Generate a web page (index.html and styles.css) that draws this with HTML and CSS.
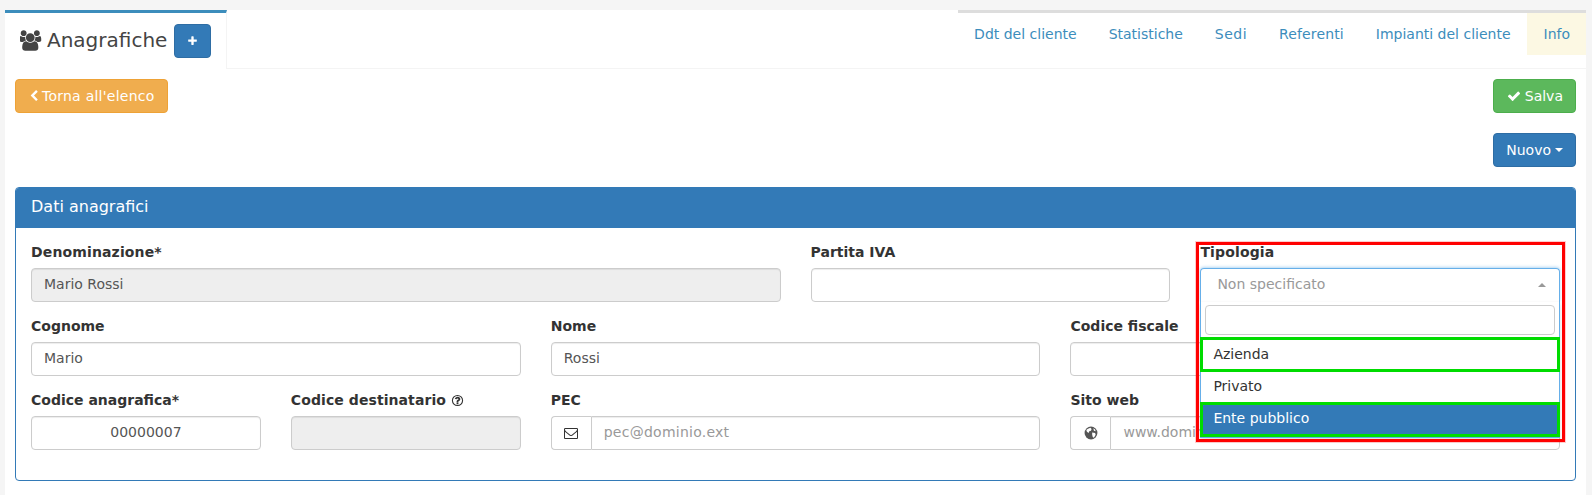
FILE: index.html
```html
<!DOCTYPE html>
<html lang="en">
<head>
    <meta charset="UTF-8">
    <meta name="viewport" content="width=device-width, initial-scale=1.0">
    <title>Anagrafiche</title>
    <link rel="stylesheet" href="styles.css">
</head>
<body>
    <div class="wrapper">
        <div class="tabs-bar">
            <div class="title-tab">
                <svg class="icon-users" viewBox="0 0 1920 1792"><path d="M529 896q-162 5-265 128h-134q-82 0-138-40.500t-56-118.500q0-353 124-353 6 0 43.500 21t97.500 42.500 119 21.500q67 0 133-23-5 37-5 66 0 139 81 256zm1071 637q0 120-73 189.500t-194 69.500h-874q-121 0-194-69.500t-73-189.500q0-53 3.500-103.500t14-109 26.500-108.500 43-97.500 62-81 85.500-53.500 111.500-20q10 0 43 21.500t73 48 107 48 135 21.500 135-21.500 107-48 73-48 43-21.500q61 0 111.500 20t85.500 53.500 62 81 43 97.500 26.500 108.500 14 109 3.500 103.500zm-1024-1277q0 106-75 181t-181 75-181-75-75-181 75-181 181-75 181 75 75 181zm704 384q0 159-112.500 271.500t-271.500 112.500-271.500-112.500-112.500-271.500 112.500-271.500 271.500-112.500 271.500 112.500 112.500 271.500zm576 225q0 78-56 118.500t-138 40.500h-134q-103-123-265-128 81-117 81-256 0-29-5-66 66 23 133 23 59 0 119-21.500t97.500-42.500 43.500-21q124 0 124 353zm-128-609q0 106-75 181t-181 75-181-75-75-181 75-181 181-75 181 75 75 181z"/></svg>
                <span class="title-text">Anagrafiche</span>
                <a class="btn btn-primary btn-add">
                    <svg class="icon-plus" viewBox="0 0 1792 1792"><path d="M1600 736v192q0 40-28 68t-68 28h-416v416q0 40-28 68t-68 28h-192q-40 0-68-28t-28-68v-416h-416q-40 0-68-28t-28-68v-192q0-40 28-68t68-28h416v-416q0-40 28-68t68-28h192q40 0 68 28t28 68v416h416q40 0 68 28t28 68z"/></svg>
                </a>
            </div>
            <ul class="nav-tabs">
                <li><a>Ddt del cliente</a></li>
                <li><a>Statistiche</a></li>
                <li class="tab-sedi"><a>Sedi</a></li>
                <li class="tab-referenti"><a>Referenti</a></li>
                <li><a>Impianti del cliente</a></li>
                <li class="active"><a>Info</a></li>
            </ul>
        </div>

        <div class="content">
            <div class="toolbar">
                <a class="btn btn-warning">
                    <svg class="icon-back" viewBox="0 0 1792 1792"><path d="M1427 301l-531 531 531 531q19 19 19 45t-19 45l-166 166q-19 19-45 19t-45-19l-742-742q-19-19-19-45t19-45l742-742q19-19 45-19t45 19l166 166q19 19 19 45t-19 45z"/></svg>
                    <span class="back-text">Torna all'elenco</span>
                </a>
                <a class="btn btn-success">
                    <svg class="icon-sm" viewBox="0 0 1792 1792"><path d="M1671 566q0 40-28 68l-724 724-136 136q-28 28-68 28t-68-28l-136-136-362-362q-28-28-28-68t28-68l136-136q28-28 68-28t68 28l294 295 656-657q28-28 68-28t68 28l136 136q28 28 28 68z"/></svg>
                    <span>Salva</span>
                </a>
            </div>
            <div class="toolbar toolbar-end">
                <a class="btn btn-primary"><span>Nuovo</span><span class="caret"></span></a>
            </div>

            <div class="panel">
                <div class="panel-heading">Dati anagrafici</div>
                <div class="panel-body">
                    <div class="form-grid">
                        <div class="field span-6">
                            <label class="spaced">Denominazione*</label>
                            <input type="text" value="Mario Rossi" disabled>
                        </div>
                        <div class="field span-3">
                            <label>Partita IVA</label>
                            <input type="text">
                        </div>
                        <div class="field span-3 tipologia">
                            <label class="spaced">Tipologia</label>
                            <div class="select-box">
                                <span class="select-value">Non specificato</span>
                                <span class="select-arrow"></span>
                            </div>
                            <div class="select-dropdown">
                                <div class="select-search"><input type="text"></div>
                                <div class="select-option marked first">Azienda</div>
                                <div class="select-option">Privato</div>
                                <div class="select-option marked highlighted">Ente pubblico</div>
                            </div>
                            <div class="red-mark"></div>
                        </div>

                        <div class="field span-4">
                            <label>Cognome</label>
                            <input type="text" value="Mario">
                        </div>
                        <div class="field span-4">
                            <label>Nome</label>
                            <input type="text" value="Rossi">
                        </div>
                        <div class="field span-4">
                            <label>Codice fiscale</label>
                            <input type="text">
                        </div>

                        <div class="field span-2">
                            <label>Codice anagrafica*</label>
                            <input class="centered" type="text" value="00000007">
                        </div>
                        <div class="field span-2">
                            <label class="spaced-sm">Codice destinatario
                                <svg class="icon-help" viewBox="0 0 1792 1792"><circle cx="896" cy="896" r="700" fill="none" stroke="#333" stroke-width="150"/><path d="M1024 1376v-192q0-14-9-23t-23-9h-192q-14 0-23 9t-9 23v192q0 14 9 23t23 9h192q14 0 23-9t9-23zm256-672q0-88-55.500-163t-138.500-116-170-41q-243 0-371 213-15 24 8 42l132 100q7 6 19 6 16 0 25-12 53-68 86-92 34-24 86-24 48 0 85.500 26t37.500 59q0 38-20 61t-68 45q-63 28-115.500 86.500t-52.500 125.500v36q0 14 9 23t23 9h192q14 0 23-9t9-23q0-19 21.500-49.500t54.500-49.500q32-18 49-28.500t46-35 44.500-48 28-60.500 12.500-81z"/></svg>
                            </label>
                            <input type="text" disabled>
                        </div>
                        <div class="field span-4">
                            <label>PEC</label>
                            <div class="input-group">
                                <span class="addon">
                                    <svg class="icon-addon" viewBox="0 0 1792 1792"><path d="M1664 1504v-768q-32 36-69 66-268 206-426 338-51 43-83 67t-86.500 48.500-102.500 24.500h-2q-48 0-102.500-24.500t-86.500-48.500-83-67q-158-132-426-338-37-30-69-66v768q0 13 9.500 22.500t22.500 9.500h1472q13 0 22.500-9.500t9.500-22.500zm0-1051v-24.500l-.5-13-3-12.500-5.500-9-9-7.500-14-2.500h-1472q-13 0-22.500 9.500t-9.500 22.500q0 168 147 284 193 152 401 317 6 5 35 29.500t46 37.500 44.500 31.500 50.500 27.500 43 9h2q20 0 43-9t50.500-27.500 44.500-31.500 46-37.500 35-29.500q208-165 401-317 54-43 100.500-115.500t46.500-131.500zm128-37v1088q0 66-47 113t-113 47h-1472q-66 0-113-47t-47-113v-1088q0-66 47-113t113-47h1472q66 0 113 47t47 113z"/></svg>
                                </span>
                                <input class="wide-placeholder" type="text" placeholder="pec@dominio.ext">
                            </div>
                        </div>
                        <div class="field span-4">
                            <label>Sito web</label>
                            <div class="input-group">
                                <span class="addon">
                                    <svg class="icon-addon" viewBox="0 0 24 24"><circle cx="12" cy="12" r="11" fill="#555"/><path fill="#fff" d="M6 5l5-2 2 2-1 3-3 1-1 3-3-2-1-3zM14 11l5 1 1 3-3 5-2-1-1-4zM16 4l3 2 1 3-3-1z"/></svg>
                                </span>
                                <input type="text" placeholder="www.dominio.ext">
                            </div>
                        </div>
                    </div>
                </div>
            </div>
        </div>
    </div>
</body>
</html>
```

FILE: styles.css
```css
* {
    box-sizing: border-box;
}
html, body {
    height: 100%;
}
body {
    margin: 0;
    padding: 10px 6px 0 5px;
    overflow: hidden;
    background-color: #f5f5f5;
    font-family: "DejaVu Sans", sans-serif;
    font-size: 14px;
    line-height: 20px;
    color: #333;
}
.wrapper {
    height: 100%;
    background-color: #fff;
}

/* top tabs */
.tabs-bar {
    display: flex;
    justify-content: space-between;
    height: 59px;
    border-bottom: 1px solid #f4f4f4;
}
.title-tab {
    display: flex;
    align-items: flex-start;
    width: 222px;
    height: 59px;
    padding: 11px 0 0 15px;
    border-top: 3px solid #3c8dbc;
    border-right: 1px solid #f4f4f4;
    background-color: #fff;
}
.icon-users {
    width: 22px;
    height: 21px;
    margin-top: 6px;
    fill: #444;
}
.title-text {
    margin: -1px 7px 0 5px;
    font-size: 20px;
    line-height: 34px;
    color: #444;
}
.btn-add {
    flex: none;
    justify-content: center;
    width: 37px;
    padding: 0;
}
.icon-plus {
    width: 14px;
    height: 14px;
    fill: #fff;
}
.nav-tabs {
    display: flex;
    height: 45px;
    margin: 0;
    padding: 0;
    list-style: none;
    border-top: 3px solid #ddd;
}
.nav-tabs a {
    display: block;
    height: 42px;
    padding: 11px 16px;
    color: #3c8dbc;
}
.nav-tabs .tab-sedi a {
    letter-spacing: 0.5px;
}
.nav-tabs .tab-referenti a {
    letter-spacing: 0.12px;
}
.nav-tabs .active a {
    padding-left: 17px;
    background-color: #fcf8e3;
}

/* buttons */
.btn {
    display: inline-flex;
    align-items: center;
    height: 34px;
    padding: 0 12px;
    border: 1px solid transparent;
    border-radius: 4px;
    color: #fff;
}
.btn-primary {
    background-color: #337ab7;
    border-color: #2e6da4;
}
.btn-warning {
    background-color: #f0ad4e;
    border-color: #eea236;
}
.btn-success {
    padding-left: 13px;
    background-color: #5cb85c;
    border-color: #4cae4c;
}
.icon-sm {
    width: 14px;
    height: 14px;
    margin-right: 4px;
    fill: #fff;
}
.icon-back {
    width: 12px;
    height: 12px;
    margin-right: 2px;
    fill: #fff;
}
.back-text {
    letter-spacing: 0.25px;
}
.caret {
    width: 0;
    height: 0;
    margin-left: 4px;
    border-top: 4px solid #fff;
    border-left: 4px solid transparent;
    border-right: 4px solid transparent;
}

/* page content */
.content {
    padding: 10px 10px 0;
}
.toolbar {
    display: flex;
    justify-content: space-between;
    margin-bottom: 20px;
}
.toolbar-end {
    justify-content: flex-end;
}
.panel {
    border: 1px solid #337ab7;
    border-radius: 4px;
}
.panel-heading {
    height: 40px;
    padding: 9px 15px;
    background-color: #337ab7;
    border-radius: 3px 3px 0 0;
    font-size: 16px;
    color: #fff;
}
.panel-body {
    padding: 15px 14.8px 30px 15px;
}

/* form */
.form-grid {
    display: grid;
    grid-template-columns: repeat(12, 1fr);
    column-gap: 30px;
    row-gap: 15px;
}
.span-2 { grid-column: span 2; }
.span-3 { grid-column: span 3; }
.span-4 { grid-column: span 4; }
.span-6 { grid-column: span 6; }
.field {
    position: relative;
}
.field label {
    display: block;
    margin: -1px 0 6px;
    font-weight: bold;
}
.field label.spaced {
    letter-spacing: 0.14px;
}
.field label.spaced-sm {
    letter-spacing: 0.08px;
}
input {
    display: block;
    width: 100%;
    height: 34px;
    padding: 5px 12px 7px;
    border: 1px solid #ccc;
    border-radius: 4px;
    background-color: #fff;
    box-shadow: inset 0 1px 1px rgba(0, 0, 0, 0.075);
    font-family: inherit;
    font-size: 14px;
    color: #555;
    outline: none;
}
input::placeholder {
    color: #999;
}
input.wide-placeholder::placeholder {
    letter-spacing: 0.25px;
}
input:disabled {
    background-color: #eee;
    opacity: 1;
}
input.centered {
    text-align: center;
}
.icon-help {
    width: 13px;
    height: 13px;
    vertical-align: -2px;
    fill: #333;
}
.input-group {
    display: flex;
}
.addon {
    display: flex;
    flex: none;
    align-items: center;
    justify-content: center;
    width: 40px;
    height: 34px;
    border: 1px solid #ccc;
    border-right: 0;
    border-radius: 4px 0 0 4px;
}
.input-group input {
    border-radius: 0 4px 4px 0;
}
.icon-addon {
    width: 14px;
    height: 14px;
    fill: #333;
}

/* open select */
.select-box {
    position: relative;
    height: 34px;
    padding: 5px 16px;
    border: 1px solid #66afe9;
    border-bottom: 0;
    border-radius: 4px 4px 0 0;
    box-shadow: 0 -1px 3px rgba(102, 175, 233, 0.5);
    color: #999;
}
.select-arrow {
    position: absolute;
    top: 14px;
    right: 13px;
    border-bottom: 4px solid #999;
    border-left: 4px solid transparent;
    border-right: 4px solid transparent;
}
.select-dropdown {
    position: absolute;
    top: 59px;
    left: 0;
    right: 0;
    z-index: 2;
    border: 1px solid #66afe9;
    border-top: 0;
    background-color: #fff;
    box-shadow: 0 2px 4px rgba(0, 0, 0, 0.15);
}
.select-search {
    padding: 3px 4px 2px;
}
.select-search input {
    height: 30px;
    border-radius: 4px;
    box-shadow: none;
}
.select-option {
    height: 30px;
    padding: 4px 12px;
}
.select-option.marked {
    height: 35px;
    margin: 0 -1px;
    padding: 3px 10px;
    border: 3px solid #00dc00;
}
.select-option.first {
    padding-top: 4px;
}
.select-option.highlighted {
    background-color: #337ab7;
    color: #fff;
}
.red-mark {
    position: absolute;
    top: -1px;
    left: -4px;
    right: -5px;
    bottom: -140px;
    z-index: 3;
    border: 3px solid #f00;
    box-shadow: 0 0 0 1px rgba(255, 0, 0, 0.2);
    pointer-events: none;
}
```
